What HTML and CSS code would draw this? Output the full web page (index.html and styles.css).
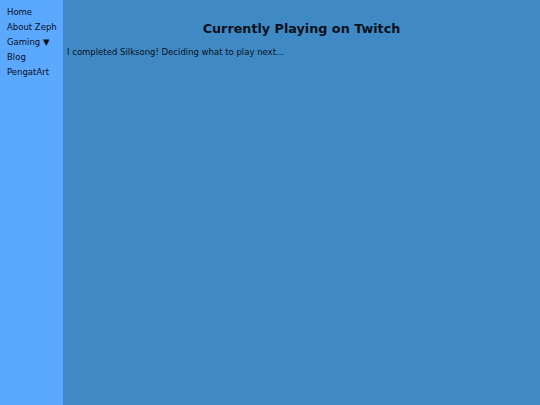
FILE: index.html
```html
<!DOCTYPE html>
<html>
<head>
<meta charset="utf-8">
<link rel="stylesheet" href="styles.css">
</head>
<body>
<nav class="sidebar">
  <a class="nav-item" href="#">Home</a>
  <a class="nav-item" href="#">About Zeph</a>
  <a class="nav-item" href="#">Gaming ▼</a>
  <a class="nav-item" href="#">Blog</a>
  <a class="nav-item" href="#">PengatArt</a>
</nav>
<main class="content">
  <h1 class="title">Currently Playing on Twitch</h1>
  <p class="status">I completed Silksong! Deciding what to play next...</p>
</main>
</body>
</html>
```
FILE: styles.css
```css
html, body {
  margin: 0;
  padding: 0;
  height: 100%;
}
body {
  display: flex;
  font-family: "DejaVu Sans", Verdana, sans-serif;
  font-size: 8.5px;
  color: #0a0f1a;
}
.sidebar {
  width: 63px;
  background: #5aa8ff;
  display: flex;
  flex-direction: column;
  padding-top: 5px;
}
.nav-item {
  color: #0a0f1a;
  text-decoration: none;
  padding: 0 0 0 7px;
  line-height: 15px;
  white-space: nowrap;
}
.content {
  flex: 1;
  background: #3f8ac4;
  padding: 0 4px;
}
.title {
  font-size: 12.75px;
  text-align: center;
  margin: 21px 0 11px;
}
.status {
  margin: 0;
}
```
